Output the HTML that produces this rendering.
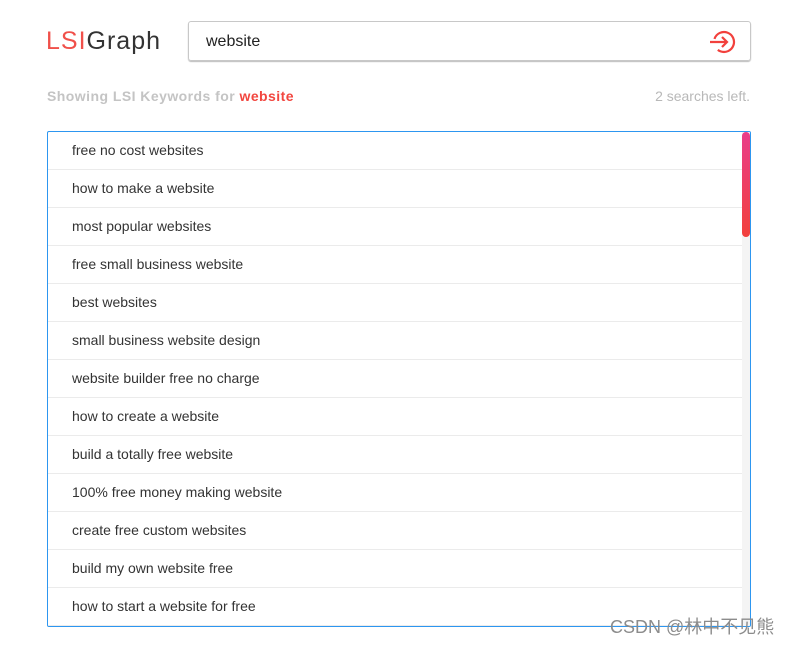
<!DOCTYPE html>
<html><head><meta charset="utf-8"><style>
body{margin:0;width:795px;height:645px;background:#fff;font-family:"Liberation Sans",sans-serif;position:relative;overflow:hidden}
.logo{position:absolute;left:46px;top:25px;font-size:25px;letter-spacing:1px;color:#333;line-height:32px}
.logo span{color:#f0504a}
.search{position:absolute;left:188px;top:21px;width:561px;height:38px;border:1px solid #c8c8c8;border-radius:3px;box-shadow:0 1px 1px #bbb}
.search .t{position:absolute;left:17px;top:11px;font-size:16px;color:#222}
.search svg{position:absolute;left:520px;top:8px}
.show{position:absolute;left:47px;top:88px;font-size:14px;font-weight:bold;color:#c4c4c4;letter-spacing:.45px}
.show b{color:#f2463f}
.left{position:absolute;right:45px;top:88px;font-size:14px;color:#b8b8b8}
.list{position:absolute;left:47px;top:131px;width:702px;height:494px;border:1px solid #2d96f0;border-radius:2px;overflow:hidden}
.row{height:38px;border-bottom:1px solid #ebebeb;width:695px;font-size:14px;color:#333;line-height:37px;padding-left:24px;box-sizing:border-box}
.track{position:absolute;right:0;top:0;width:8px;height:100%;background:#f4f4f4}
.thumb{position:absolute;right:0;top:0;width:8px;height:105px;border-radius:4px;background:linear-gradient(#e93d8a,#f2403c)}
.wm{position:absolute;left:610px;top:613px;font-size:18px;color:#8c8c8c;font-family:"Liberation Sans","Noto Sans CJK SC",sans-serif}
</style></head><body>
<div class="logo"><span>LSI</span>Graph</div>
<div class="search"><div class="t">website</div>
<svg width="28" height="24" viewBox="0 0 28 24"><circle cx="15" cy="12" r="10" fill="none" stroke="#f2403c" stroke-width="2.2" stroke-dasharray="50 12" transform="rotate(200 15 12)"/><path d="M1 12H18M13 7l5 5-5 5" fill="none" stroke="#f2403c" stroke-width="2.2"/></svg></div>
<div class="show">Showing LSI Keywords for <b>website</b></div>
<div class="left">2 searches left.</div>
<div class="list">
<div class="row">free no cost websites</div>
<div class="row">how to make a website</div>
<div class="row">most popular websites</div>
<div class="row">free small business website</div>
<div class="row">best websites</div>
<div class="row">small business website design</div>
<div class="row">website builder free no charge</div>
<div class="row">how to create a website</div>
<div class="row">build a totally free website</div>
<div class="row">100% free money making website</div>
<div class="row">create free custom websites</div>
<div class="row">build my own website free</div>
<div class="row">how to start a website for free</div>
<div class="track"></div><div class="thumb"></div>
</div>
<div class="wm">CSDN @林中不见熊</div>
</body></html>
